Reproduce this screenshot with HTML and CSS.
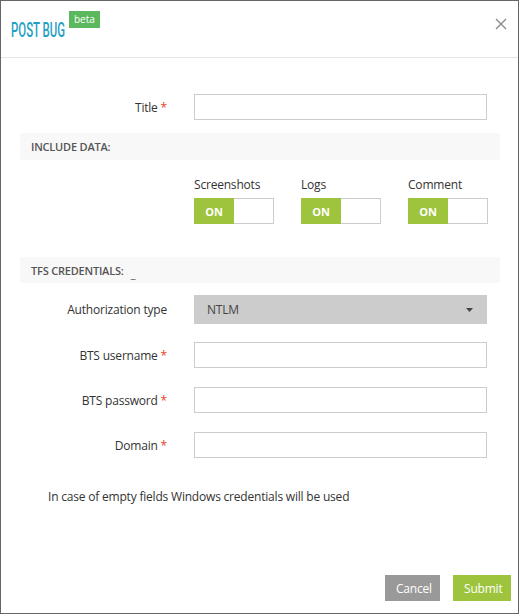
FILE: index.html
```html
<!DOCTYPE html>
<html>
<head>
<meta charset="utf-8">
<link rel="stylesheet" href="styles.css">
</head>
<body>
<div class="modal">
  <div class="header">
    <div class="brand"><div class="title-wrap"><span class="title">POST BUG</span></div><span class="beta">beta</span></div>
    <svg class="close" width="12" height="12" viewBox="0 0 12 12"><path d="M1 1L11 11M11 1L1 11" stroke="#888" stroke-width="1.3" fill="none"/></svg>
  </div>
  <div class="content">
    <div class="row first">
      <label class="lbl">Title <span class="req">*</span></label>
      <div class="input"></div>
    </div>
    <div class="section">INCLUDE DATA:</div>
    <div class="toggles">
      <div class="tg">
        <div class="tg-label">Screenshots</div>
        <div class="switch"><span class="on">ON</span></div>
      </div>
      <div class="tg">
        <div class="tg-label">Logs</div>
        <div class="switch"><span class="on">ON</span></div>
      </div>
      <div class="tg">
        <div class="tg-label">Comment</div>
        <div class="switch"><span class="on">ON</span></div>
      </div>
    </div>
    <div class="section sec2">TFS CREDENTIALS: <span class="us">_</span></div>
    <div class="row auth">
      <label class="lbl">Authorization type</label>
      <div class="select"><span>NTLM</span><svg width="7" height="4" viewBox="0 0 7 4"><path d="M0 0H7L3.5 4Z" fill="#444"/></svg></div>
    </div>
    <div class="row r2">
      <label class="lbl">BTS username <span class="req">*</span></label>
      <div class="input"></div>
    </div>
    <div class="row r3">
      <label class="lbl">BTS password <span class="req">*</span></label>
      <div class="input"></div>
    </div>
    <div class="row r3">
      <label class="lbl">Domain <span class="req">*</span></label>
      <div class="input"></div>
    </div>
    <p class="note">In case of empty fields Windows credentials will be used</p>
  </div>
  <div class="footer">
    <button class="btn cancel">Cancel</button>
    <button class="btn submit">Submit</button>
  </div>
</div>
</body>
</html>
```
FILE: styles.css
```css
html, body { margin: 0; padding: 0; background: #fff; }
body { font-family: "Open Sans", "DejaVu Sans", sans-serif; color: #333; font-size: 12px; letter-spacing: -0.2px; }
.modal {
  width: 519px; height: 614px; box-sizing: border-box;
  border: 1px solid #666; display: flex; flex-direction: column;
}
.header {
  height: 57px; box-sizing: border-box; border-bottom: 1px solid #e5e5e5;
  display: flex; justify-content: space-between; align-items: flex-start;
  padding: 0 11px 0 10px;
}
.brand { display: flex; align-items: flex-start; }
.title-wrap { width: 57px; white-space: nowrap; }
.title {
  display: inline-block;
  font-family: "Roboto", "Liberation Sans", sans-serif; font-weight: 500;
  color: #1f9fc2; font-size: 20px; line-height: 20px; margin-top: 19px; letter-spacing: 0;
  transform: scaleX(0.57); transform-origin: left center;
}
.beta {
  background: #5cb85c; color: #fff; font-size: 10px; line-height: 17px;
  padding: 0 5px; margin-top: 10px; margin-left: 1px; letter-spacing: 0;
}
.close { margin-top: 17px; }
.content { padding: 36px 0 0 19px; }
.row { display: grid; grid-template-columns: 147px 293px; column-gap: 27px; align-items: center; }
.lbl { text-align: right; font-size: 12px; color: #333; }
.req { color: #e8401c; }
.input { height: 26px; box-sizing: border-box; border: 1px solid #ccc; }
.section {
  margin-top: 13px; width: 480px; height: 27px; box-sizing: border-box;
  background: #f8f8f8; padding-left: 11px; display: flex; align-items: center;
  font-size: 11px; font-weight: 600; color: #555;
}
.sec2 { margin-top: 33px; height: 26px; }
.us { margin-left: 7px; margin-top: 6px; font-weight: 400; }
.toggles { display: flex; gap: 27px; padding-left: 174px; margin-top: 16px; }
.tg { width: 80px; }
.tg-label { font-size: 12px; line-height: 17px; margin-bottom: 5px; }
.switch { height: 26px; box-sizing: border-box; border: 1px solid #ccc; display: flex; }
.on {
  width: 40px; background: #9dc43c; color: #fff; font-weight: 700; font-size: 11px;
  display: flex; align-items: center; justify-content: center; margin: -1px 0 -1px -1px;
}
.auth { margin-top: 12px; }
.select {
  height: 29px; background: #cccccc; display: flex; align-items: center;
  justify-content: space-between; padding: 0 14px 0 13px; font-size: 12px; color: #444;
}
.r2 { margin-top: 18px; }
.r3 { margin-top: 19px; }
.note { margin: 30px 0 0 28px; font-size: 12px; color: #333; }
.footer { margin-top: auto; display: flex; justify-content: flex-end; gap: 13px; padding: 0 7px 12px 0; }
.btn {
  height: 26px; border: 0; color: #fff; font-family: "Open Sans", sans-serif; font-size: 12px;
  padding: 0 11px; letter-spacing: -0.2px;
}
.cancel { background: #999; width: 55px; }
.submit { background: #9dc43c; width: 58px; }
```
